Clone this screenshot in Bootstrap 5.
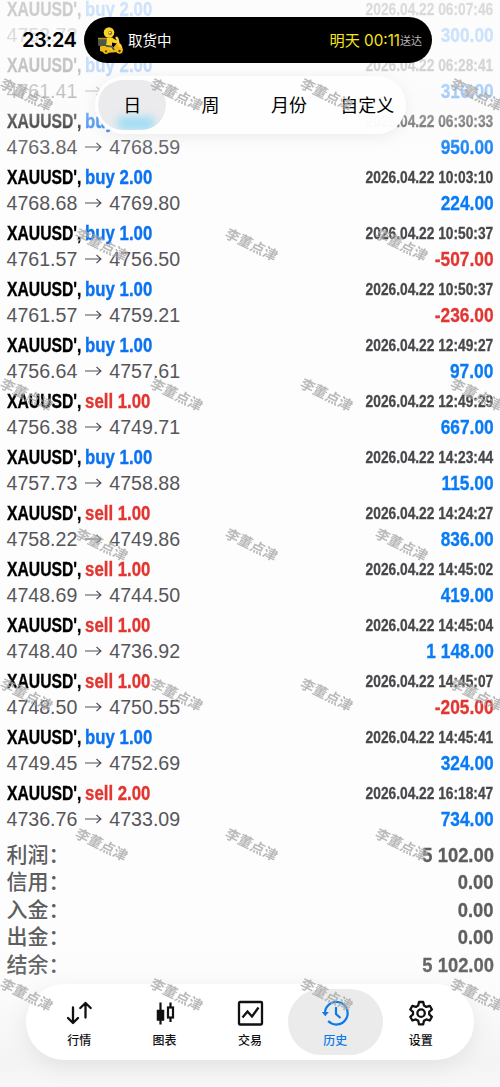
<!DOCTYPE html>
<html lang="zh-CN">
<head>
<meta charset="utf-8">
<meta name="viewport" content="width=device-width, initial-scale=1">
<title>历史</title>
<link href="https://cdn.jsdelivr.net/npm/bootstrap@5.3.0/dist/css/bootstrap.min.css" rel="stylesheet">
<style>
body{font-family:"Liberation Sans","Noto Sans CJK SC",sans-serif;background:#fdfdfd;color:#000}
.screen{width:500px;height:1087px}
/* condensed bold face, squeezed from the regular-width one */
.narrow{font-weight:700;transform-origin:0 50%;display:inline-block}
.narrow-end{font-weight:700;transform-origin:100% 50%;display:inline-block;-webkit-text-stroke:.3px currentColor}
.cjk{font-family:Inter,"Noto Sans CJK SC",sans-serif}
.deals{margin-top:-4px;padding:0 6.5px}
.deal{height:56px}
.deal>div{height:26px;line-height:27px;white-space:nowrap}
.sym{font-size:19.5px;transform:scaleX(.805);-webkit-text-stroke:.35px currentColor}
.side{font-size:19.5px;margin-left:4.5px;transform:scaleX(1.07)}
.when{font-size:16.5px;color:#48484c;transform:scaleX(.833)}
.price{font-size:19.6px;color:#56565a}
.price svg{margin:0 7px 0 8px}
.gain{font-size:20.5px;line-height:25px;color:#097bf5;transform:scaleX(.845)}
.loss{color:#e23631}
.buy{color:#0b73f2}
.sums{padding:5px 6.5px 0;color:#5e5e60}
.sums>div{height:27.4px;line-height:27.4px;white-space:nowrap}
.sums .cjk{font-size:21px;font-weight:500;line-height:27.6px}
.sum-val{font-size:20.8px;transform:scaleX(.885)}
.veil-top{height:175px;background:linear-gradient(rgba(252,252,253,.82) 0,rgba(252,252,253,.78) 68px,rgba(251,251,251,.65) 95px,rgba(250,250,250,.36) 122px,rgba(250,250,250,.08) 150px,transparent)}
.veil-bottom{height:140px;background:linear-gradient(transparent,rgba(242,242,242,.12) 40px,rgba(238,238,238,.6) 115px,rgba(246,246,246,.8))}
.clock{left:22px;top:27px;font-size:20px;line-height:27px;font-weight:600;letter-spacing:-.55px}
.island{left:84px;top:17px;width:348px;height:46px;background:#000;padding:2px 10px 0 13px}
.seg{left:95px;top:76px;width:311px;height:58px;background:rgba(254,254,254,.97);box-shadow:0 3px 16px rgba(0,0,0,.07);font-size:18px}
.seg>span{width:78.4px;flex-shrink:0;line-height:59px;text-align:center}
.seg-on{left:3px;top:4px;width:68px;height:50px;border-radius:25px;background:#ebebed;overflow:hidden}
.seg-on i{left:20px;top:37px;width:36px;height:13px;background:#9edcf5;filter:blur(4px)}
.tabs{left:26px;top:984px;width:448px;height:76px;background:#fff;border-radius:38px;box-shadow:0 6px 24px rgba(0,0,0,.08);padding:0 10.5px}
.tab-it{width:85.4px;padding-top:15px;font-size:12px;line-height:16px;font-weight:500;color:#111}
.tab-it svg{display:block;width:28px;height:28px;margin-bottom:6px}
.tab-it.on{color:#0b7bea}
.tab-it.on::before{content:"";position:absolute;inset:5px -5px;border-radius:33px;background:#ebebeb}
.wm{width:64px;height:18px;line-height:18px;text-align:center;font-family:"Noto Sans CJK SC",sans-serif;font-weight:700;font-size:14px;color:#a9a9a9;opacity:.8;transform:rotate(26deg) skewX(-4deg);white-space:nowrap}
</style>
</head>
<body>
<main class="screen position-relative overflow-hidden">
  <section class="deals" id="deals"></section>
  <section class="sums">
    <div class="d-flex justify-content-between"><span class="cjk">利润：</span><span class="narrow-end sum-val">5 102.00</span></div>
    <div class="d-flex justify-content-between"><span class="cjk">信用：</span><span class="narrow-end sum-val">0.00</span></div>
    <div class="d-flex justify-content-between"><span class="cjk">入金：</span><span class="narrow-end sum-val">0.00</span></div>
    <div class="d-flex justify-content-between"><span class="cjk">出金：</span><span class="narrow-end sum-val">0.00</span></div>
    <div class="d-flex justify-content-between"><span class="cjk">结余：</span><span class="narrow-end sum-val">5 102.00</span></div>
  </section>
  <div class="veil-top position-absolute top-0 start-0 w-100"></div>
  <div class="veil-bottom position-absolute bottom-0 start-0 w-100"></div>

  <div class="clock cjk position-absolute">23:24</div>
  <div class="island cjk position-absolute rounded-pill d-flex align-items-center text-white">
    <svg width="27" height="28" viewBox="0 0 27 28">
      <path d="M3 20q2-4 8-3l5 4 4-5 4 1 2 6-5 2-12 1-6-2z" fill="#eeb914"/>
      <rect x="1" y="11" width="10" height="8" rx="1" fill="#4d5742"/><path d="M1 11.500h10" stroke="#b3912c" stroke-width="1.500"/>
      <path d="M10 11q5-2 7 1l4 2-1 2.500-5-1 0 3.500 2 2-1 3-7-4z" fill="#fbd325"/>
      <circle cx="12" cy="5.500" r="5.300" fill="#fbd325"/><circle cx="13.200" cy="6" r="1.900" fill="#8a6614"/><circle cx="12.800" cy="5.600" r=".9" fill="#fff"/>
      <path d="M19 10l1.500 2 1 5 3 4" fill="none" stroke="#f8d64a" stroke-width="2.400"/>
      <path d="M9 19l6 .5 2 3.500" fill="none" stroke="#4c5561" stroke-width="1.800"/>
      <circle cx="9" cy="24" r="3" fill="#f0bd16"/><circle cx="9" cy="24.300" r="1.100" fill="#4a3a0c"/>
      <circle cx="22.500" cy="23.500" r="3.200" fill="#f0bd16"/><circle cx="22.500" cy="24" r="1.200" fill="#4a3a0c"/>
    </svg>
    <span style="font-size:14.5px;margin-left:4px">取货中</span>
    <span class="ms-auto" style="font-size:15.2px;color:#f8e71c">明天 00:11</span>
    <span style="font-size:11px;color:#b4b4b4">送达</span>
  </div>

  <nav class="seg cjk position-absolute rounded-pill d-flex">
    <div class="seg-on position-absolute"><i class="position-absolute"></i></div>
    <span class="position-relative" style="margin-left:-2px">日</span><span>周</span><span>月份</span><span>自定义</span>
  </nav>

  <nav class="tabs cjk position-absolute d-flex">
    <div class="tab-it d-flex flex-column align-items-center">
      <svg viewBox="0 0 28 28" fill="none" stroke="#111" stroke-width="2.3" stroke-linecap="round" stroke-linejoin="round"><path d="M8 8.500v15.500M3 19l5 5 5-5M20.500 18.500V4M15.300 9l5.200-5 5.200 5"/></svg>行情</div>
    <div class="tab-it d-flex flex-column align-items-center">
      <svg viewBox="0 0 28 28" fill="none" stroke="#111" stroke-width="2.200"><path d="M9.500 3.500v22"/><rect x="6.500" y="11.500" width="6" height="9.500" fill="#111" stroke-width="1.500"/><path d="M19.500 3.500v5M19.500 18.500v4.500"/><rect x="17" y="8.500" width="5" height="10"/></svg>图表</div>
    <div class="tab-it d-flex flex-column align-items-center">
      <svg viewBox="0 0 28 28" fill="none" stroke="#111" stroke-width="2.300"><rect x="3" y="3" width="23" height="22.500" rx="1"/><path d="M6.500 18.500l5-6 4.500 5 6.500-9"/></svg>交易</div>
    <div class="tab-it on position-relative d-flex flex-column align-items-center">
      <svg class="position-relative" viewBox="0 0 28 28" fill="none" stroke="#0b7bea" stroke-width="2.200"><path d="M4 14.500a11.300 11.300 0 1 1 3.200 7.600"/><path d="M15 8v7l4.500 4"/><path d="M.8 13h7l-3.500 4.300z" fill="#0b7bea" stroke="none"/></svg><span class="position-relative">历史</span></div>
    <div class="tab-it d-flex flex-column align-items-center">
      <svg viewBox="0 0 28 28" fill="none" stroke="#111" stroke-width="2.300" stroke-linejoin="round"><path d="M12 3h4.200l.8 3.600 2.300 1.300 3.500-1.100 2.100 3.700-2.700 2.400v2.500l2.700 2.400-2.100 3.700-3.500-1.100-2.300 1.300-.8 3.600H12l-.8-3.600-2.300-1.300-3.500 1.100-2.100-3.700L6 15.400v-2.500l-2.700-2.400 2.100-3.700 3.500 1.100 2.300-1.300z"/><circle cx="14.100" cy="14.150" r="3.700"/></svg>设置</div>
  </nav>
  <div id="marks" class="pe-none"></div>
</main>
<script>
const deals = [
  ['buy 2.00','06:07:46','4753.72','4756.72','300.00'],
  ['buy 2.00','06:28:41','4761.41','4762.99','316.00'],
  ['buy 2.00','06:30:33','4763.84','4768.59','950.00'],
  ['buy 2.00','10:03:10','4768.68','4769.80','224.00'],
  ['buy 1.00','10:50:37','4761.57','4756.50','-507.00'],
  ['buy 1.00','10:50:37','4761.57','4759.21','-236.00'],
  ['buy 1.00','12:49:27','4756.64','4757.61','97.00'],
  ['sell 1.00','12:49:29','4756.38','4749.71','667.00'],
  ['buy 1.00','14:23:44','4757.73','4758.88','115.00'],
  ['sell 1.00','14:24:27','4758.22','4749.86','836.00'],
  ['sell 1.00','14:45:02','4748.69','4744.50','419.00'],
  ['sell 1.00','14:45:04','4748.40','4736.92','1 148.00'],
  ['sell 1.00','14:45:07','4748.50','4750.55','-205.00'],
  ['buy 1.00','14:45:41','4749.45','4752.69','324.00'],
  ['sell 2.00','16:18:47','4736.76','4733.09','734.00']
];
const arrow = '<svg width="17" height="10" viewBox="0 0 17 10" fill="none" stroke="#505053" stroke-width="1.1"><path d="M0 5h16M11.500 1l4.500 4-4.500 4"/></svg>';
document.getElementById('deals').innerHTML = deals.map(([side, time, from, to, pl]) => `
  <div class="deal">
    <div class="d-flex justify-content-between"><span class="narrow sym">XAUUSD',<span class="narrow side ${side[0] === 'b' ? 'buy' : 'loss'}">${side}</span></span><span class="narrow-end when">2026.04.22 ${time}</span></div>
    <div class="d-flex justify-content-between"><span class="price d-flex align-items-center">${from}${arrow}${to}</span><span class="narrow-end gain ${pl[0] === '-' ? 'loss' : ''}">${pl}</span></div>
  </div>`).join('');

// staggered watermark grid
let marks = '';
for (let r = 0; r < 7; r++)
  for (let x = r % 2 ? 102 : 27; x < 500; x += 150)
    marks += `<span class="wm position-absolute" style="left:${x - 32}px;top:${85 + r * 150}px">李董点津</span>`;
document.getElementById('marks').innerHTML = marks;
</script>
<script src="https://cdn.jsdelivr.net/npm/bootstrap@5.3.0/dist/js/bootstrap.bundle.min.js"></script>
</body>
</html>
